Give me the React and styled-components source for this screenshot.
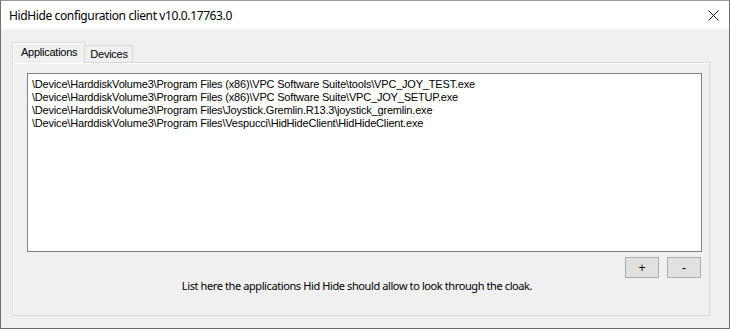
import React from "react";
import styled, { createGlobalStyle } from "styled-components";

const GlobalStyle = createGlobalStyle`
  html, body {
    margin: 0;
    padding: 0;
    background: #ffffff;
  }
`;

const apps = [
	"\\Device\\HarddiskVolume3\\Program Files (x86)\\VPC Software Suite\\tools\\VPC_JOY_TEST.exe",
	"\\Device\\HarddiskVolume3\\Program Files (x86)\\VPC Software Suite\\VPC_JOY_SETUP.exe",
	"\\Device\\HarddiskVolume3\\Program Files\\Joystick.Gremlin.R13.3\\joystick_gremlin.exe",
	"\\Device\\HarddiskVolume3\\Program Files\\Vespucci\\HidHideClient\\HidHideClient.exe",
];

export default function App() {
	return (
		<>
			<GlobalStyle />
			<Window>
				<TitleBar>
					<Title>HidHide configuration client v10.0.17763.0</Title>
					<CloseButton>
						<svg width="11" height="11" viewBox="0 0 11 11">
							<path d="M0.5 0.5 L10.5 10.5 M10.5 0.5 L0.5 10.5" stroke="#111" strokeWidth="1" />
						</svg>
					</CloseButton>
				</TitleBar>
				<Body>
					<TabStrip>
						<Tab selected>Applications</Tab>
						<Tab>Devices</Tab>
					</TabStrip>
					<TabPage>
						<ListBox>
							{apps.map((a) => (
								<ListItem key={a}>{a}</ListItem>
							))}
						</ListBox>
						<ButtonRow>
							<SmallButton>+</SmallButton>
							<SmallButton>-</SmallButton>
						</ButtonRow>
						<Hint>List here the applications Hid Hide should allow to look through the cloak.</Hint>
					</TabPage>
				</Body>
			</Window>
		</>
	);
}

const Window = styled.div`
	width: 730px;
	height: 329px;
	box-sizing: border-box;
	border: 1px solid #6f6f6f;
	border-top-color: #9a9a9a;
	display: flex;
	flex-direction: column;
	background: #f0f0f0;
	font-family: "Segoe UI", "Noto Sans", sans-serif;
	overflow: hidden;
`;

const TitleBar = styled.div`
	height: 29px;
	background: linear-gradient(#ffffff 0%, #ffffff 85%, #f6f6f6 100%);
	display: flex;
	align-items: center;
	justify-content: space-between;
	padding-left: 8px;
`;

const Title = styled.div`
	font-size: 12px;
	color: #000;
	letter-spacing: -0.38px;
`;

const CloseButton = styled.div`
	width: 32px;
	height: 29px;
	display: flex;
	align-items: center;
	justify-content: center;
`;

const Body = styled.div`
	flex: 1;
	display: flex;
	flex-direction: column;
	padding: 12px 19px 12px 11px;
`;

const TabStrip = styled.div`
	display: flex;
	align-items: flex-end;
	height: 21px;
	margin-bottom: -1px;
	position: relative;
	z-index: 1;
`;

const Tab = styled.div`
	font-family: "Liberation Sans", Arial, sans-serif;
	font-size: 11px;
	letter-spacing: -0.25px;
	color: #000;
	box-sizing: border-box;
	height: ${(p) => (p.selected ? "21px" : "18px")};
	padding: ${(p) => (p.selected ? "3px 7px 0 8px" : "2px 4px 0 5px")};
	background: #f0f0f0;
	border: 1px solid #d9d9d9;
	border-bottom: ${(p) => (p.selected ? "none" : "1px solid #d9d9d9")};
	border-left: ${(p) => (p.selected ? "1px solid #d9d9d9" : "none")};
	box-shadow: ${(p) => (p.selected ? "inset 1px 1px 0 #ffffff" : "none")};
`;

const TabPage = styled.div`
	flex: 1;
	display: flex;
	flex-direction: column;
	border: 1px solid #d9d9d9;
	box-shadow: inset 1px 1px 0 #ffffff;
	padding: 10px 7px 0 14px;
`;

const ListBox = styled.div`
	height: 179px;
	box-sizing: border-box;
	background: #ffffff;
	border: 1px solid #828282;
	padding: 4px 4px;
`;

const ListItem = styled.div`
	font-family: "Liberation Sans", Arial, sans-serif;
	font-size: 11px;
	letter-spacing: -0.19px;
	line-height: 13px;
	color: #000;
	white-space: nowrap;
`;

const ButtonRow = styled.div`
	display: flex;
	justify-content: flex-end;
	gap: 8px;
	margin-top: 5px;
	padding-right: 1px;
`;

const SmallButton = styled.div`
	width: 34px;
	height: 21px;
	box-sizing: border-box;
	background: #e1e1e1;
	border: 1px solid #adadad;
	display: flex;
	align-items: center;
	justify-content: center;
	font-family: "Liberation Sans", Arial, sans-serif;
	font-size: 12px;
	color: #000;
`;

const Hint = styled.div`
	font-size: 11px;
	letter-spacing: -0.4px;
	color: #000;
	text-align: center;
	padding-right: 15px;
	line-height: 16px;
`;
